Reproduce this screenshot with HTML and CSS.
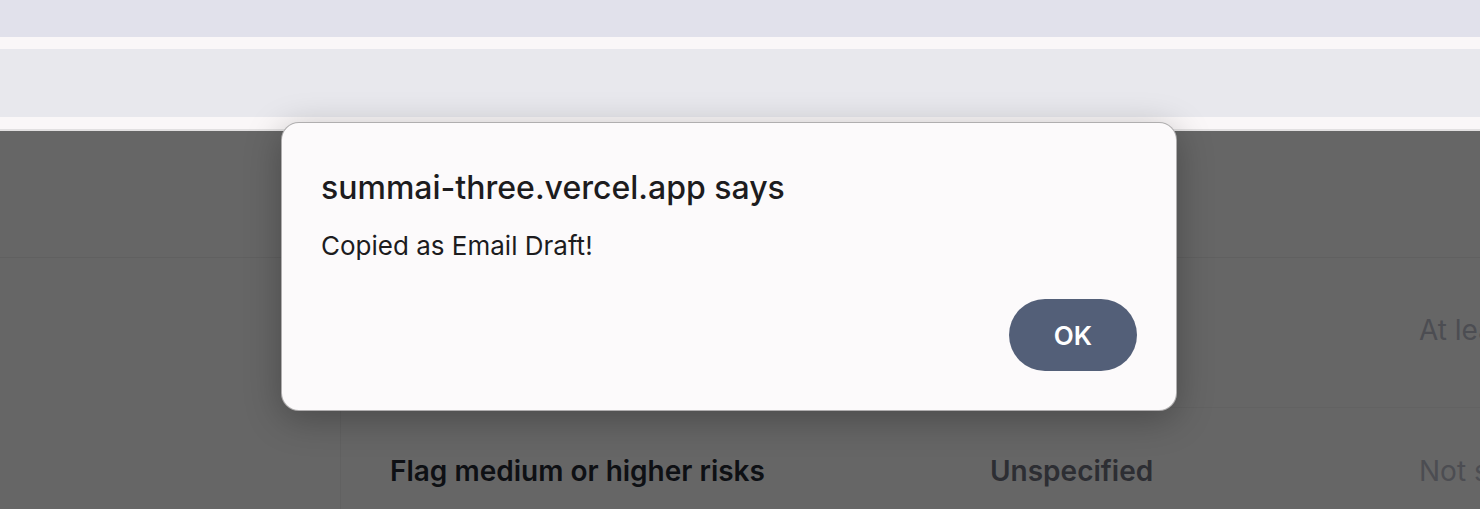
FILE: index.html
```html
<!DOCTYPE html>
<html lang="en">
<head>
<meta charset="utf-8">
<title>summai</title>
<link rel="stylesheet" href="styles.css">
</head>
<body>
<div class="chrome">
  <div class="tabs"></div>
  <div class="strip"></div>
  <div class="toolbar"></div>
  <div class="strip strip-bottom"></div>
</div>
<main class="page">
  <div class="page-header"></div>
  <div class="table">
    <div class="row row-first">
      <div class="cell cell-label"></div>
      <div class="cell cell-value"></div>
      <div class="cell cell-note">At least one reviewer</div>
    </div>
    <div class="row row-second">
      <div class="cell cell-label">Flag medium or higher risks</div>
      <div class="cell cell-value">Unspecified</div>
      <div class="cell cell-note">Not specified</div>
    </div>
  </div>
</main>
<div class="dialog" role="alertdialog">
  <div class="dialog-title">summai-three.vercel.app says</div>
  <div class="dialog-message">Copied as Email Draft!</div>
  <div class="dialog-actions">
    <button class="dialog-ok">OK</button>
  </div>
</div>
</body>
</html>
```
FILE: styles.css
```css
* { box-sizing: border-box; }
html, body {
  margin: 0;
  padding: 0;
  width: 1480px;
  height: 509px;
  overflow: hidden;
  font-family: Inter, "Noto Sans", "Liberation Sans", sans-serif;
}
body {
  display: flex;
  flex-direction: column;
  background: #666666;
}
.chrome { display: flex; flex-direction: column; flex: none; }
.tabs { height: 37px; background: #e1e1eb; }
.strip { height: 12px; background: #faf7f8; }
.toolbar { height: 68px; background: #e8e8ed; }
.strip-bottom { border-bottom: 2px solid #e2e0e1; height: 14px; }

.page {
  flex: 1;
  min-height: 0;
  background: #666666;
  display: flex;
  flex-direction: column;
}
.page-header {
  height: 127px;
  border-bottom: 1px solid #606060;
  flex: none;
}
.table {
  margin-left: 340px;
  border-left: 1px solid #616161;
  flex: 1;
  display: flex;
  flex-direction: column;
}
.row {
  display: flex;
  align-items: center;
  height: 122px;
  flex: none;
}
.row-first {
  height: 150px;
  padding-bottom: 6px;
  border-bottom: 1px solid #626262;
}
.row-second {
  padding-top: 4px;
}
.cell {
  flex: none;
  font-size: 28px;
  line-height: 34px;
  white-space: nowrap;
}
.cell-label {
  width: 649px;
  padding-left: 49px;
  font-weight: 600;
  color: #0e1014;
}
.cell-value {
  width: 429px;
  font-weight: 600;
  color: #2d2e33;
}
.cell-note {
  width: 61px;
  overflow: hidden;
  color: #4c4d52;
}

.dialog {
  position: absolute;
  left: 281px;
  top: 122px;
  width: 896px;
  height: 289px;
  background: #fcfafb;
  border: 1px solid rgba(0, 0, 0, 0.3);
  border-radius: 18px;
  box-shadow: 0 8px 36px rgba(0, 0, 0, 0.28);
  padding: 45px 39px 39px 39px;
  display: flex;
  flex-direction: column;
}
.dialog-title {
  font-size: 32px;
  font-weight: 500;
  color: #1d1c1e;
  line-height: 40px;
}
.dialog-message {
  margin-top: 22px;
  font-size: 26px;
  color: #1d1c1e;
  line-height: 32px;
}
.dialog-actions {
  margin-top: auto;
  display: flex;
  justify-content: flex-end;
}
.dialog-ok {
  width: 128px;
  height: 72px;
  border: none;
  border-radius: 36px;
  background: #535f78;
  color: #ffffff;
  font-family: Inter, "Noto Sans", sans-serif;
  font-size: 26px;
  font-weight: 600;
  padding: 0;
}
```
